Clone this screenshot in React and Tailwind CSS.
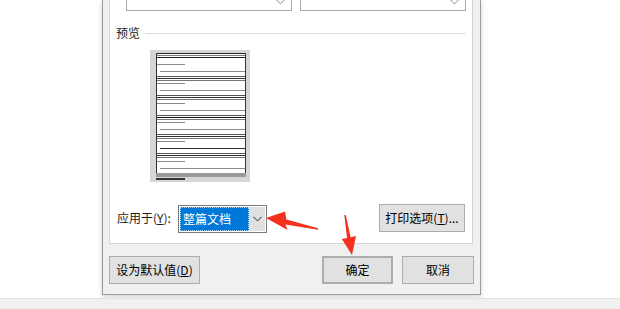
import React from "react";

const font = { fontFamily: '"Noto Sans CJK SC", "Noto Sans", sans-serif' };

function Chevron({ className = "", stroke = "#606060" }) {
  return (
    <svg width="9" height="6" viewBox="0 0 9 6" className={className}>
      <path d="M0.5 0.8 L4.5 4.8 L8.5 0.8" fill="none" stroke={stroke} strokeWidth="1.1" />
    </svg>
  );
}

function PreviewPage() {
  // table-like preview thumbnail
  const lines = [];
  const full = (y, color = "#3a3a3a", w = 1) =>
    lines.push(<line key={`f${lines.length}`} x1="6" x2="96" y1={y} y2={y} stroke={color} strokeWidth={w} />);
  full(3.5, "#222");
  full(5.5, "#777");
  full(7.5, "#222");
  for (let k = 0; k < 6; k++) {
    const o = Math.round(k * 19.33);
    lines.push(<line key={`s${k}`} x1="6" x2="35" y1={14.5 + o} y2={14.5 + o} stroke="#8a8a8a" />);
    lines.push(
      <line key={`l${k}`} x1="10" x2="96" y1={21.5 + o} y2={21.5 + o} stroke={k === 4 ? "#333" : "#8a8a8a"} strokeWidth={k === 4 ? 1.4 : 1} />
    );
    if (k < 5) {
      full(26.5 + o, "#555");
      full(28.5 + o, k === 2 ? "#111" : "#333", k === 2 ? 1.6 : 1);
      full(30.5 + o, "#777");
    }
  }
  return (
    <svg width="100" height="132" viewBox="0 0 100 132" shapeRendering="crispEdges">
      <rect x="0" y="0" width="100" height="132" fill="#d6d6d6" />
      <rect x="6" y="3" width="90" height="124" fill="#ffffff" />
      {lines}
      <line x1="6.5" x2="6.5" y1="3" y2="127" stroke="#333" />
      <line x1="95.5" x2="95.5" y1="3" y2="127" stroke="#333" />
      <rect x="6" y="123" width="90" height="4" fill="#9a9a9a" />
      <rect x="6" y="128" width="29" height="2" fill="#333" />
    </svg>
  );
}

function Btn({ children, className = "" }) {
  return (
    <div
      className={`h-[28px] flex items-center justify-center bg-[#e1e1e1] border border-[#adadad] text-[12px] text-black ${className}`}
    >
      {children}
    </div>
  );
}

function Arrows() {
  return (
    <svg width="620" height="309" className="absolute left-0 top-0 pointer-events-none">
      <polygon
        points="318,228.3 318,229.8 285.4,224.6 287.6,230 266,218 285,211.5 286.4,219.6"
        fill="#f4301f"
      />
      <polygon
        points="344.3,215 345.8,215 350.6,237.2 356,236 352,255 341.8,239 347,237.9"
        fill="#f4301f"
      />
    </svg>
  );
}

export default function App() {
  return (
    <div className="relative w-[620px] h-[309px] bg-white overflow-hidden flex flex-col" style={font}>
      <div className="h-[298px]">
        <div className="ml-[102px] w-[379px] h-[295px] bg-[#f0f0f0] border-x border-b border-[#9c9c9c] px-[6px] flex flex-col shadow-[0_2px_5px_rgba(0,0,0,0.18)]">
          {/* tab panel */}
          <div className="w-[364px] h-[244px] bg-white border-x border-b border-[#d4d4d4] flex flex-col">
            <div className="h-[11px] flex pl-[16px] gap-[8px]">
              <div className="w-[166px] h-[11px] border-x border-b border-[#a8a8a8] flex justify-end items-start pr-[6px]">
                <Chevron className="-mt-[1px]" stroke="#b0b0b0" />
              </div>
              <div className="w-[166px] h-[11px] border-x border-b border-[#a8a8a8] flex justify-end items-start pr-[6px]">
                <Chevron className="-mt-[1px]" stroke="#b0b0b0" />
              </div>
            </div>

            <div className="mt-[15px] h-[14px] flex items-center pl-[6px] pr-[6px]">
              <span className="text-[12px] leading-none text-[#1a1a1a]">预览</span>
              <div className="flex-1 ml-[5px] h-px bg-[#dcdcdc]" />
            </div>

            <div className="mt-[10px] ml-[40px]">
              <PreviewPage />
            </div>

            <div className="mt-[22px] h-[28px] flex items-center pl-[7px] pr-[7px]">
              <span className="w-[61px] text-[12px] leading-none text-[#1a1a1a] whitespace-nowrap">
                应用于(<span className="underline">Y</span>):
              </span>
              <div className="w-[89px] h-[28px] mt-[2px] border border-[#7a7a7a] bg-white flex p-px">
                <div className="flex-1 bg-[#0078d7] border border-dotted border-[#b3d4f0] flex items-center pl-[2px] text-[12px] text-white leading-none">
                  整篇文档
                </div>
                <div className="w-[16px] bg-[#e0e0e0] flex items-center justify-center">
                  <Chevron />
                </div>
              </div>
              <Btn className="ml-auto w-[86px]">
                打印选项(<span className="underline">T</span>)...
              </Btn>
            </div>
          </div>

          {/* bottom buttons */}
          <div className="mt-[12px] flex">
            <Btn className="w-[91px]">
              设为默认值(<span className="underline">D</span>)
            </Btn>
            <Btn className="ml-auto w-[71px] border-2 border-[#0078d7]">确定</Btn>
            <Btn className="ml-[9px] w-[72px]">取消</Btn>
          </div>
        </div>
      </div>
      <div className="flex-1 bg-[#f0f0f0] border-t border-[#e2e2e2]" />
      <Arrows />
    </div>
  );
}
